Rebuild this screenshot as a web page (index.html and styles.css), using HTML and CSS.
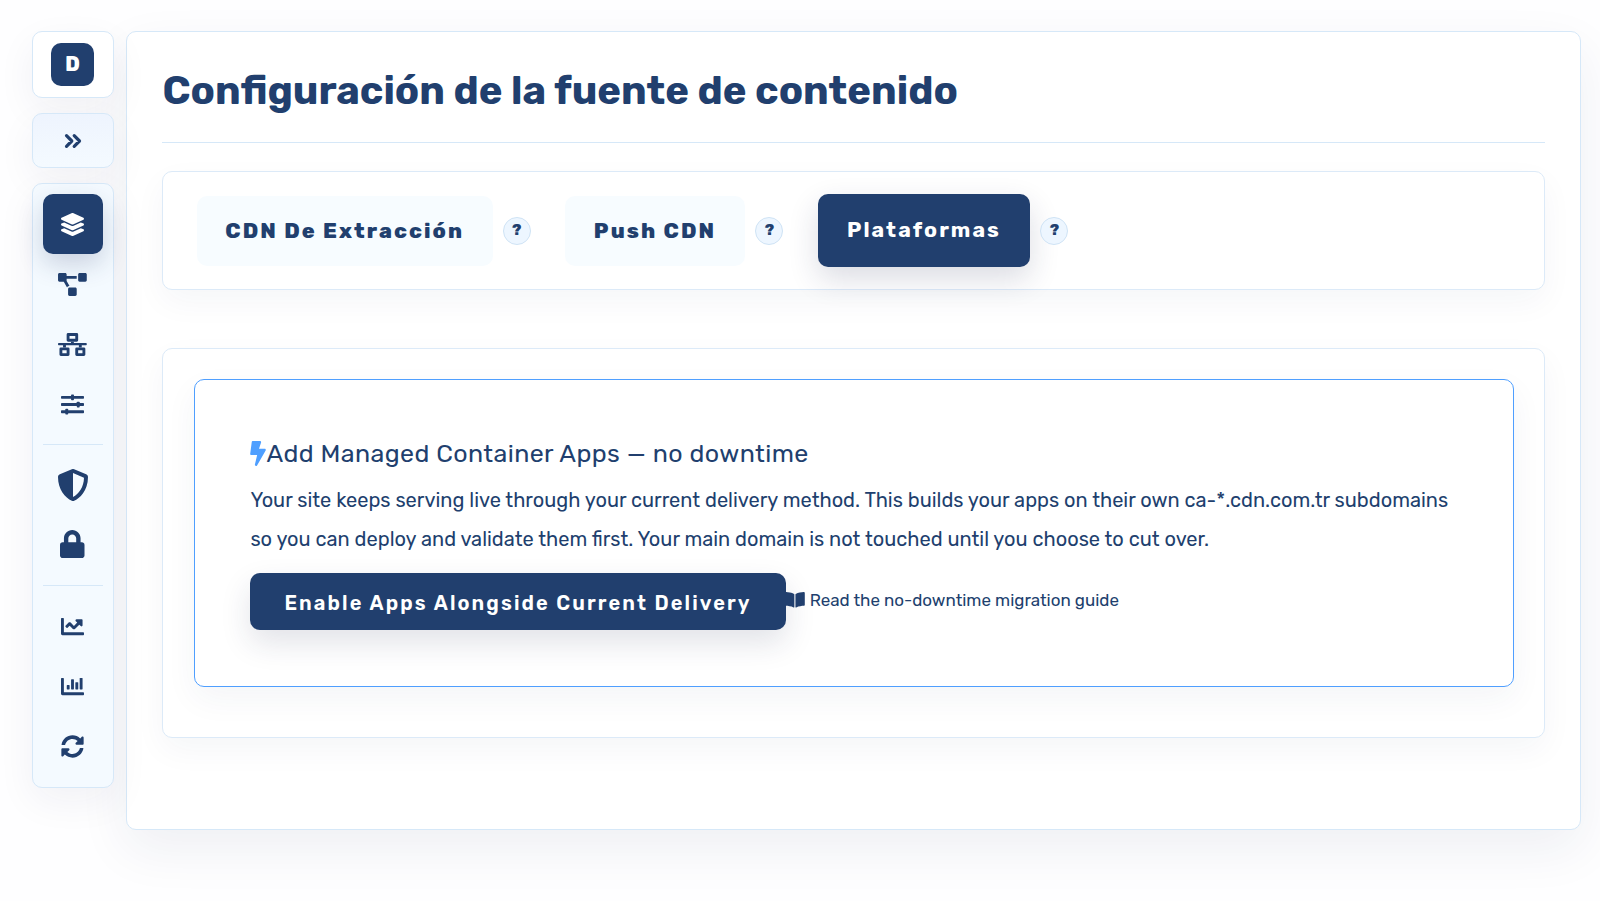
FILE: index.html
```html
<!DOCTYPE html>
<html lang="es">
<head>
<meta charset="utf-8">
<title>Configuración de la fuente de contenido</title>
<link rel="stylesheet" href="styles.css">
</head>
<body>
<div class="layout">
  <aside class="sidebar">
    <div class="brand"><span class="brand-mark">D</span></div>
    <button class="toggle" aria-label="Expandir">
      <svg width="18" height="16" viewBox="0 0 18 16"><path d="M2.5 2.7l5.3 5.3-5.3 5.3M10.2 2.7l5.3 5.3-5.3 5.3" fill="none" stroke="currentColor" stroke-width="3.2" stroke-linecap="round" stroke-linejoin="round"/></svg>
    </button>
    <nav class="nav">
      <a class="nav-item active"><svg width="23" height="23" viewBox="0 0 512 512"><path d="M12.41 148.02l232.94 105.67c6.8 3.09 14.49 3.09 21.29 0l232.94-105.67c16.55-7.51 16.55-32.52 0-40.03L266.65 2.31a25.607 25.607 0 0 0-21.29 0L12.41 107.98c-16.55 7.51-16.55 32.53 0 40.04zm487.18 88.28l-58.09-26.33-161.64 73.27c-7.56 3.43-15.59 5.17-23.86 5.17s-16.29-1.74-23.86-5.17L70.51 209.97l-58.1 26.33c-16.55 7.5-16.55 32.5 0 40l232.94 105.59c6.8 3.08 14.49 3.08 21.29 0L499.59 276.3c16.55-7.5 16.55-32.5 0-40zm0 127.8l-57.87-26.23-161.86 73.37c-7.56 3.43-15.59 5.17-23.86 5.17s-16.29-1.74-23.86-5.17L70.29 337.87 12.41 364.1c-16.55 7.5-16.55 32.5 0 40l232.94 105.59c6.8 3.08 14.49 3.08 21.29 0L499.59 404.1c16.55-7.5 16.55-32.5 0-40z"/></svg></a>
      <a class="nav-item"><svg width="28.8" height="23" viewBox="0 0 640 512"><path d="M384 320H256c-17.67 0-32 14.33-32 32v128c0 17.67 14.33 32 32 32h128c17.67 0 32-14.33 32-32V352c0-17.67-14.33-32-32-32zM192 32c0-17.67-14.33-32-32-32H32C14.33 0 0 14.33 0 32v128c0 17.67 14.33 32 32 32h95.72l73.16 128.04C211.98 300.98 232.4 288 256 288h.28L192 175.51V128h224V64H192V32zM608 0H480c-17.67 0-32 14.33-32 32v128c0 17.67 14.33 32 32 32h128c17.67 0 32-14.33 32-32V32c0-17.67-14.33-32-32-32z"/></svg></a>
      <a class="nav-item"><svg width="28.8" height="23" viewBox="0 0 640 512"><g fill="none" stroke="currentColor" stroke-width="64" stroke-linejoin="round"><path d="M224 32h192v128H224zM64 352h160v128H64zM416 352h160v128H416z"/></g><path d="M16 224h272v-32h64v32h272c9 0 16 7 16 16v16c0 9-7 16-16 16h-96v48h-64v-48H176v48h-64v-48H16c-9 0-16-7-16-16v-16c0-9 7-16 16-16z"/></svg></a>
      <a class="nav-item"><svg width="23" height="23" viewBox="0 0 512 512"><rect y="64" width="512" height="64" rx="16"/><rect y="224" width="512" height="64" rx="16"/><rect y="384" width="512" height="64" rx="16"/><rect x="224" y="32" width="64" height="128" rx="16"/><rect x="352" y="192" width="64" height="128" rx="16"/><rect x="96" y="352" width="64" height="128" rx="16"/></svg></a>
      <hr class="nav-rule">
      <a class="nav-item"><svg width="32" height="32" viewBox="0 0 512 512"><path fill-rule="evenodd" d="M466.5 83.7l-192-80a48.15 48.15 0 0 0-36.9 0l-192 80C27.7 91.1 16 108.6 16 128c0 198.5 114.5 335.7 221.5 380.3 11.8 4.9 25.1 4.9 36.9 0C360.1 472.6 496 349.3 496 128c0-19.4-11.7-36.9-29.5-44.3zM256.1 446.3l-.1-381 175.9 73.3c-3.3 151.4-82.1 261.1-175.8 307.7z"/></svg></a>
      <a class="nav-item lock"><svg width="24.5" height="28" viewBox="0 0 448 512"><path d="M400 224h-24v-72C376 68.2 307.8 0 224 0S72 68.2 72 152v72H48c-26.5 0-48 21.5-48 48v192c0 26.5 21.5 48 48 48h352c26.5 0 48-21.5 48-48V272c0-26.5-21.5-48-48-48zm-104 0H152v-72c0-39.7 32.3-72 72-72s72 32.3 72 72v72z"/></svg></a>
      <hr class="nav-rule lower">
      <a class="nav-item"><svg width="23" height="23" viewBox="0 0 512 512"><path d="M496 384H64V80c0-8.84-7.16-16-16-16H16C7.16 64 0 71.16 0 80v336c0 17.67 14.33 32 32 32h464c8.84 0 16-7.16 16-16v-32c0-8.84-7.16-16-16-16zM464 96H345.94c-21.38 0-32.09 25.85-16.97 40.97l32.4 32.4L288 242.75l-73.37-73.37c-12.5-12.5-32.76-12.5-45.25 0l-68.69 68.69c-6.25 6.25-6.25 16.38 0 22.63l22.62 22.62c6.25 6.25 16.38 6.25 22.63 0L192 237.25l73.37 73.37c12.5 12.5 32.76 12.5 45.25 0l96-96 32.4 32.4c15.12 15.12 40.97 4.41 40.97-16.97V112c.01-8.84-7.15-16-15.99-16z"/></svg></a>
      <a class="nav-item"><svg width="23" height="23" viewBox="0 0 512 512"><path d="M496 384H64V80c0-8.84-7.16-16-16-16H16C7.16 64 0 71.16 0 80v336c0 17.67 14.33 32 32 32h464c8.84 0 16-7.16 16-16v-32c0-8.84-7.16-16-16-16z"/><rect x="128" y="224" width="64" height="96" rx="12.8"/><rect x="224" y="96" width="64" height="224" rx="12.8"/><rect x="320" y="160" width="64" height="160" rx="12.8"/><rect x="416" y="64" width="64" height="256" rx="12.8"/></svg></a>
      <a class="nav-item"><svg width="23" height="23" viewBox="0 0 512 512"><path d="M370.72 133.28C339.458 104.008 298.888 87.962 255.848 88c-77.458.068-144.328 53.178-162.791 126.85-1.344 5.363-6.122 9.15-11.651 9.15H24.103c-7.498 0-13.194-6.807-11.807-14.176C33.933 94.924 134.813 8 256 8c66.448 0 126.791 26.136 171.315 68.685L463.03 40.97C478.149 25.851 504 36.559 504 57.941V192c0 13.255-10.745 24-24 24H345.941c-21.382 0-32.09-25.851-16.971-40.971l41.75-41.749zM32 296h134.059c21.382 0 32.09 25.851 16.971 40.971l-41.75 41.75c31.262 29.273 71.835 45.319 114.876 45.28 77.418-.07 144.315-53.144 162.787-126.849 1.344-5.363 6.122-9.15 11.651-9.15h57.304c7.498 0 13.194 6.807 11.807 14.176C478.067 417.076 377.187 504 256 504c-66.448 0-126.791-26.136-171.315-68.685L48.97 471.03C33.851 486.149 8 475.441 8 454.059V320c0-13.255 10.745-24 24-24z"/></svg></a>
    </nav>
  </aside>
  <main class="main">
    <h1 class="title">Configuración de la fuente de contenido</h1>
    <section class="tabs">
      <button class="tab tab-pull"><span>CDN De Extracción</span></button><span class="help">?</span>
      <button class="tab tab-push"><span>Push CDN</span></button><span class="help">?</span>
      <button class="tab tab-platforms selected"><span>Plataformas</span></button><span class="help">?</span>
    </section>
    <section class="panel">
      <article class="notice">
        <h2 class="notice-title"><svg class="bolt" width="16" height="25" viewBox="0 0 320 512"><path d="M296 160H180.6l42.6-129.8C227.2 15 215.7 0 200 0H56C44 0 33.8 8.9 32.2 20.8l-32 240C-1.7 275.2 9.5 288 24 288h118.7L96.6 482.5c-3.6 15.2 8 29.5 23.3 29.5 8.4 0 16.4-4.4 20.8-12l176-304c9.3-15.9-2.2-36-20.7-36z"/></svg><span>Add Managed Container Apps — no downtime</span></h2>
        <p class="copy">Your site keeps serving live through your current delivery method. This builds your apps on their own ca-*.cdn.com.tr subdomains<br>so you can deploy and validate them first. Your main domain is not touched until you choose to cut over.</p>
        <div class="actions">
          <button class="primary"><span>Enable Apps Alongside Current Delivery</span></button>
          <a class="guide"><svg width="19.8" height="17.6" viewBox="0 0 576 512"><path d="M542.22 32.05c-54.8 3.11-163.72 14.43-230.96 55.59-4.64 2.84-7.27 7.89-7.27 13.17v363.87c0 11.55 12.63 18.85 23.28 13.49 69.18-34.82 169.23-44.32 218.7-46.92 16.89-.89 30.02-14.43 30.02-30.66V62.75c.01-17.71-15.35-31.74-33.77-30.7zM264.73 87.64C197.5 46.48 88.58 35.17 33.78 32.05 15.36 31.01 0 45.04 0 62.75V400.6c0 16.24 13.13 29.78 30.02 30.66 49.49 2.6 149.59 12.11 218.77 46.95 10.62 5.35 23.21-1.94 23.21-13.46V100.63c0-5.29-2.62-10.14-7.27-12.99z"/></svg><span>Read the no-downtime migration guide</span></a>
        </div>
      </article>
    </section>
  </main>
</div>
</body>
</html>
```
FILE: styles.css
```css
* { box-sizing: border-box; }
body {
  margin: 0;
  height: 901px;
  overflow: hidden;
  background: #fefeff;
  color: #213f6e;
  font-family: Rubik, Roboto, "Open Sans", sans-serif;
}
svg { display: block; fill: currentColor; flex: none; }
button { font: inherit; color: inherit; border: 0; margin: 0; padding: 0; white-space: nowrap; }

.layout { display: flex; align-items: flex-start; gap: 12.7px; padding: 31px 19px 0 31.5px; }

.sidebar {
  position: relative; z-index: 1;
  width: 82.2px; flex: none; display: flex; flex-direction: column; gap: 15px;
}
.brand, .toggle, .nav {
  border: 1px solid #d6e8f8;
  border-radius: 10px;
  box-shadow: 0 13px 38px rgba(30, 40, 80, .06);
}
.brand { height: 67px; display: flex; align-items: center; justify-content: center; background: #fff; }
.brand-mark {
  width: 43px; height: 43px; border-radius: 10px; padding-bottom: 1px;
  display: flex; align-items: center; justify-content: center;
  background: #213f6e; color: #fff; font-size: 20px; font-weight: 800;
}
.toggle { height: 55px; display: flex; align-items: center; justify-content: center; background: linear-gradient(#eef4fe, #f4faff); }
.nav { height: 605px; padding: 10px 10px 0; background: #f4faff; }
.nav-item { height: 60.2px; display: flex; align-items: center; justify-content: center; border-radius: 10px; }
.nav-item.active { background: #213f6e; color: #fff; box-shadow: 0 10px 26px rgba(30, 50, 100, .2); }
.nav-item.lock { padding-bottom: 3px; }
.nav-rule { height: 1px; margin: 9.6px 0; border: 0; background: #d6e8f8; }
.nav-rule.lower { margin-bottom: 10.4px; }

.main {
  flex: 1; height: 799px; padding: 0 35px;
  background: #fff;
  border: 1px solid #d6e8f8; border-radius: 10px;
  box-shadow: 0 19px 51px rgba(30, 40, 80, .07);
}
.title {
  height: 111px; margin: 0 0 28px; padding-top: 35px;
  border-bottom: 1px solid #d6e8f8;
  font-size: 40px; line-height: 48px; font-weight: 700; white-space: nowrap;
}
.tabs {
  height: 119px; padding-left: 33.4px;
  display: flex; align-items: center;
  border: 1px solid #dceaf8; border-radius: 10px;
  background: #fff;
  box-shadow: 0 12px 32px rgba(30, 50, 90, .045);
}
.tab {
  height: 70px; flex: none; border-radius: 10px; background: #f7fcff;
  font-size: 21.3px; font-weight: 800; letter-spacing: 2.07px; text-align: left;
  padding-left: 28.5px; padding-bottom: 1px;
}
.tab-pull { width: 296px; }
.tab-push { width: 180px; }
.tab-platforms { width: 212.5px; }
.tab.selected {
  height: 73px; padding-left: 29px; padding-bottom: 3px;
  background: #213f6e; color: #fff; font-weight: 700;
  box-shadow: 0 12px 30px rgba(30, 40, 80, .16);
}
.help {
  width: 28px; height: 28px; flex: none; margin: 0 34.6px 0 10px; padding-bottom: 1px;
  display: flex; align-items: center; justify-content: center;
  border: 1px solid #cfe3f5; border-radius: 50%; background: #edf6ff;
  font-size: 15px; font-weight: 800;
}

.panel {
  height: 390px; margin-top: 58px; padding: 30px 30px 30px 31px;
  border: 1px solid #dceaf8; border-radius: 10px;
  background: #fff;
  box-shadow: 0 12px 32px rgba(30, 50, 90, .045);
}
.notice {
  height: 308px; padding: 55px 0 0 55px;
  border: 1px solid #4f9fff; border-radius: 10px;
  background: #fff;
  box-shadow: 0 12px 32px rgba(30, 50, 90, .05);
}
.notice-title {
  height: 37px; margin: 0; display: flex; align-items: center;
  font-size: 25px; font-weight: 400; letter-spacing: .4px; white-space: nowrap;
}
.bolt { color: #4f9fff; }
.copy { margin: 9px 0 15px; font-size: 20px; line-height: 38.5px; white-space: nowrap; }
.actions { display: flex; align-items: flex-start; }
.primary {
  width: 536px; height: 57px; flex: none; padding: 2px 0 0 34px; text-align: left;
  border-radius: 10px; background: #213f6e; color: #fff;
  font-size: 20px; font-weight: 600; letter-spacing: 2.1px;
  box-shadow: 0 13px 30px rgba(30, 40, 80, .13);
}
.guide {
  height: 54px; margin-left: -1px; display: flex; align-items: center; gap: 4.5px;
  font-size: 17px; letter-spacing: -.02px; white-space: nowrap;
}
```
